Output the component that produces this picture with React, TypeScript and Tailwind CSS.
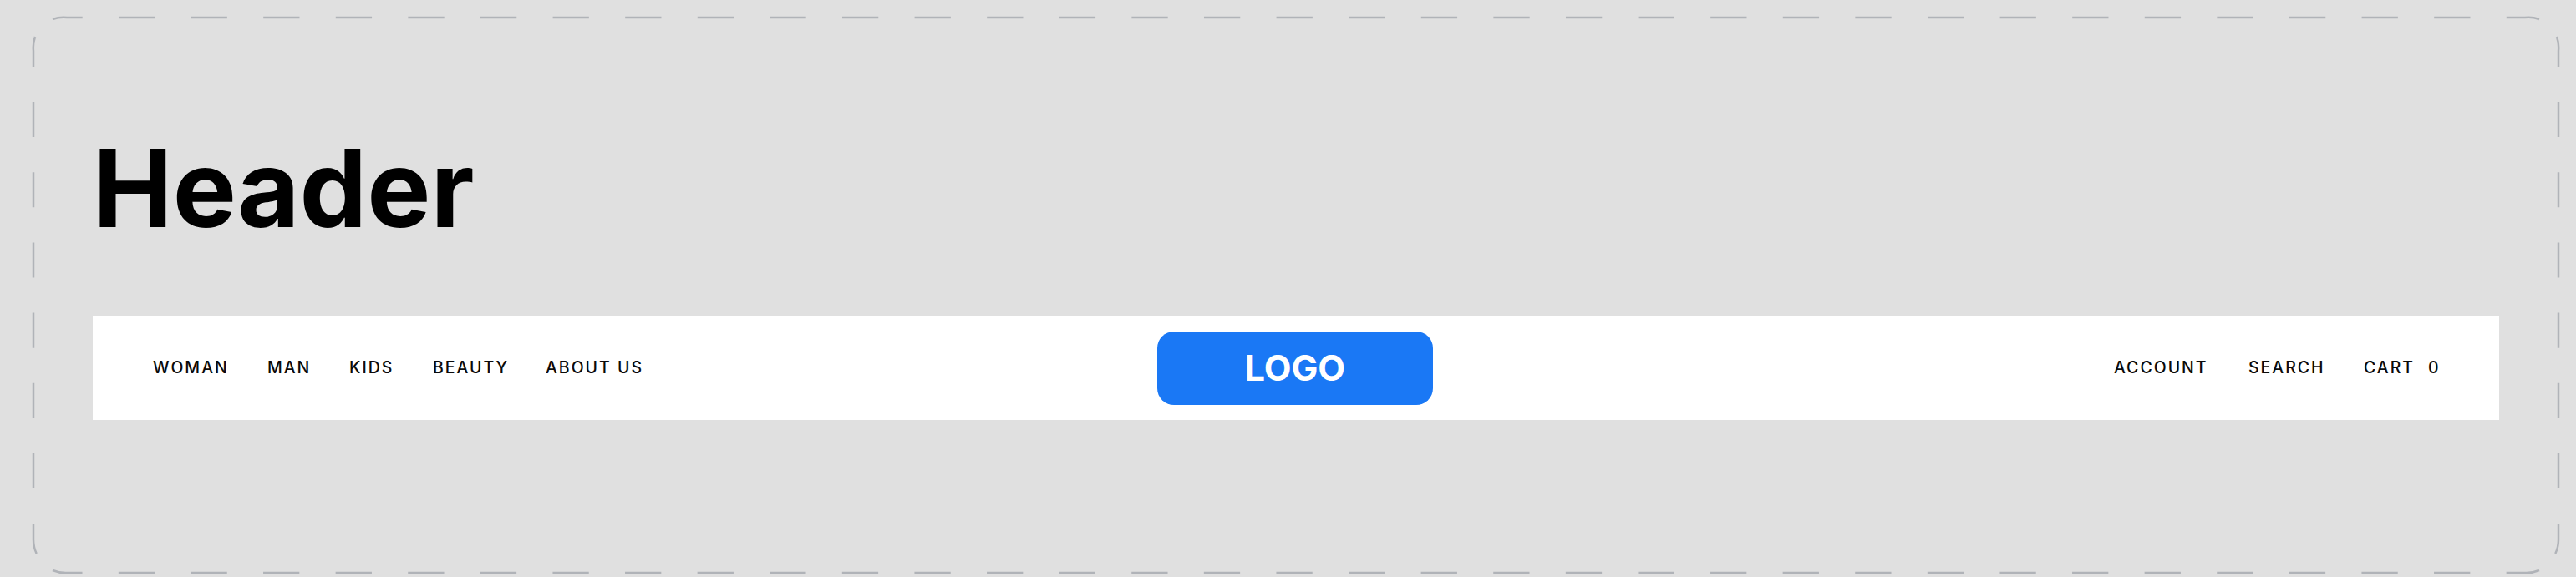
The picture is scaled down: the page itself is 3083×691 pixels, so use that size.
const left = [
  { label: "WOMAN", w: "w-[137px]" },
  { label: "MAN", w: "w-[98px]" },
  { label: "KIDS", w: "w-[100px]" },
  { label: "BEAUTY", w: "w-[135px]" },
  { label: "ABOUT US", w: "w-[112px]" },
];
const right = [
  { label: "ACCOUNT", w: "w-[161px]" },
  { label: "SEARCH", w: "w-[138px]" },
  { label: "CART", w: "w-[77px]" },
  { label: "0", w: "w-[12px]" },
];

function NavText({ label, w }: { label: string; w: string }) {
  return (
    <span className={`${w} whitespace-nowrap text-[19.5px] leading-[24px] tracking-[2px] text-[#0a0a0a] font-['Inter','Liberation_Sans',sans-serif] font-[450]`}>
      {label}
    </span>
  );
}

function DashedFrame() {
  const cls = "fill-none stroke-[#b0b3b8] stroke-[2.5px]";
  return (
    <svg className="absolute left-0 top-0 pointer-events-none" width="3083" height="691" viewBox="0 0 3083 691">
      <path className={cls} d="M63 23 A40 40 0 0 1 80 21 L3022 21 A40 40 0 0 1 3039 23" strokeDasharray="43.3 43.3" style={{ strokeDashoffset: 7.4 }} />
      <path className={cls} d="M42 44 A40 40 0 0 0 40 61 L40 646 A40 40 0 0 0 43.7 663" strokeDasharray="42.1 42.1" style={{ strokeDashoffset: 6 }} />
      <path className={cls} d="M3060 44 A40 40 0 0 1 3062 61 L3062 646 A40 40 0 0 1 3058.3 663" strokeDasharray="42.1 42.1" style={{ strokeDashoffset: 6 }} />
      <path className={cls} d="M63 683 A40 40 0 0 0 80 686 L3022 686 A40 40 0 0 0 3039 683" strokeDasharray="43.3 43.3" style={{ strokeDashoffset: 7.4 }} />
    </svg>
  );
}

export default function App() {
  return (
    <div className="relative w-[3083px] h-[691px] overflow-hidden bg-[#e0e0e0] pl-[111px] pr-[92px] pt-[148px]">
      <DashedFrame />
      <h1 className="h-[231px] text-[128px] leading-[155px] font-bold text-black font-['Inter',sans-serif]">
        Header
      </h1>
      <header className="grid h-[124px] w-[2880px] grid-cols-[1202px_330px_1fr] items-center bg-white pl-[72px] pr-[73px]">
        <nav className="flex items-center -mt-[2px]">
          {left.map((i) => (
            <NavText key={i.label} {...i} />
          ))}
        </nav>
        <div className="flex h-[88px] items-center justify-center rounded-[20px] bg-[#1a78f5] text-[42.5px] font-bold leading-none text-white font-['Inter',sans-serif]">
          LOGO
        </div>
        <nav className="flex items-center justify-end -mt-[2px]">
          {right.map((i) => (
            <NavText key={i.label} {...i} />
          ))}
        </nav>
      </header>
    </div>
  );
}
